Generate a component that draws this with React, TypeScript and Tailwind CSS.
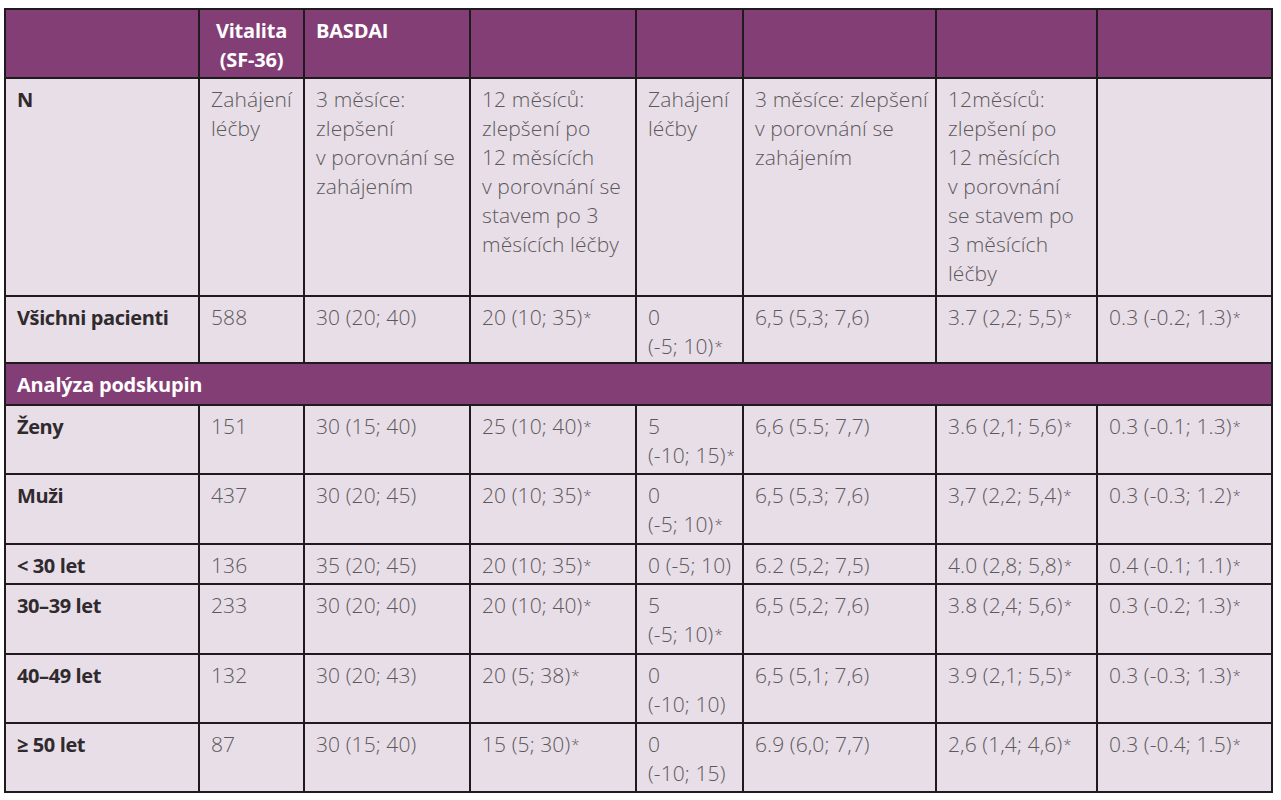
const cols = [194, 105, 166, 166, 107, 193, 161, 175]

type Cell = string | string[]

interface DataRow {
  label: string
  cells: Cell[]
  h: string
}

const topRows: DataRow[] = [
  {
    label: 'Všichni pacienti',
    h: 'h-[67px]',
    cells: ['588', '30 (20; 40)', '20 (10; 35)*', ['0', '(-5; 10)*'], '6,5 (5,3; 7,6)', '3.7 (2,2; 5,5)*', '0.3 (-0.2; 1.3)*'],
  },
]

const subRows: DataRow[] = [
  {
    label: 'Ženy',
    h: 'h-[69px]',
    cells: ['151', '30 (15; 40)', '25 (10; 40)*', ['5', '(-10; 15)*'], '6,6 (5.5; 7,7)', '3.6 (2,1; 5,6)*', '0.3 (-0.1; 1.3)*'],
  },
  {
    label: 'Muži',
    h: 'h-[70px]',
    cells: ['437', '30 (20; 45)', '20 (10; 35)*', ['0', '(-5; 10)*'], '6,5 (5,3; 7,6)', '3,7 (2,2; 5,4)*', '0.3 (-0.3; 1.2)*'],
  },
  {
    label: '< 30 let',
    h: 'h-[40px]',
    cells: ['136', '35 (20; 45)', '20 (10; 35)*', '0 (-5; 10)', '6.2 (5,2; 7,5)', '4.0 (2,8; 5,8)*', '0.4 (-0.1; 1.1)*'],
  },
  {
    label: '30–39 let',
    h: 'h-[70px]',
    cells: ['233', '30 (20; 40)', '20 (10; 40)*', ['5', '(-5; 10)*'], '6,5 (5,2; 7,6)', '3.8 (2,4; 5,6)*', '0.3 (-0.2; 1.3)*'],
  },
  {
    label: '40–49 let',
    h: 'h-[69px]',
    cells: ['132', '30 (20; 43)', '20 (5; 38)*', ['0', '(-10; 10)'], '6,5 (5,1; 7,6)', '3.9 (2,1; 5,5)*', '0.3 (-0.3; 1.3)*'],
  },
  {
    label: '≥ 50 let',
    h: 'h-[69px]',
    cells: ['87', '30 (15; 40)', '15 (5; 30)*', ['0', '(-10; 15)'], '6.9 (6,0; 7,7)', '2,6 (1,4; 4,6)*', '0.3 (-0.4; 1.5)*'],
  },
]

const nRow: string[][] = [
  ['Zahájení', 'léčby'],
  ['3 měsíce:', 'zlepšení', 'v porovnání se', 'zahájením'],
  ['12 měsíců:', 'zlepšení po', '12 měsících', 'v porovnání se', 'stavem po 3', 'měsících léčby'],
  ['Zahájení', 'léčby'],
  ['3 měsíce: zlepšení', 'v porovnání se', 'zahájením'],
  ['12měsíců:', 'zlepšení po', '12 měsících', 'v porovnání', 'se stavem po', '3 měsících', 'léčby'],
  [],
]

const cellBase = 'border-2 border-[#1e1a1e] align-top px-[11px] pt-[6px] pb-0'
const bodyText = 'text-[21px] leading-[29px] text-[#5d585b] font-light tracking-[0.1px] whitespace-nowrap'
const labelText = 'text-[20px] leading-[29px] text-[#2f2a2e] font-bold tracking-[-0.4px] whitespace-nowrap'
const headText = 'text-[20px] leading-[29px] font-bold tracking-[-0.2px] text-white'

function Line({ text }: { text: string }) {
  // the significance mark is set small and raised in the source table
  if (text.endsWith('*')) {
    return (
      <div className="h-[29px]">
        {text.slice(0, -1)}
        <span className="relative -top-[2px] ml-[1px] text-[15px] leading-[0]">*</span>
      </div>
    )
  }
  return <div>{text}</div>
}

function Lines({ value }: { value: Cell }) {
  const lines = Array.isArray(value) ? value : [value]
  return (
    <>
      {lines.map((l, i) => (
        <Line key={i} text={l} />
      ))}
    </>
  )
}

function Row({ row }: { row: DataRow }) {
  return (
    <tr className={`${row.h} bg-[#e7dee7]`}>
      <td className={`${cellBase} ${labelText}`}>{row.label}</td>
      {row.cells.map((c, i) => (
        <td key={i} className={`${cellBase} ${bodyText}`}>
          <Lines value={c} />
        </td>
      ))}
    </tr>
  )
}

export default function App() {
  return (
    <div className="min-h-screen bg-white pl-[4px] pt-[8px]" style={{ fontFamily: '"Open Sans", Lato, sans-serif' }}>
      <table className="table-fixed border-collapse w-[1269px]">
        <colgroup>
          {cols.map((w, i) => (
            <col key={i} style={{ width: w }} />
          ))}
        </colgroup>
        <thead>
          <tr className="h-[69px] bg-[#833e76]">
            <th className={cellBase} />
            <th className={`${cellBase} ${headText} text-center`}>
              Vitalita
              <br />
              (SF-36)
            </th>
            <th className={`${cellBase} ${headText} text-left`}>BASDAI</th>
            <th className={cellBase} />
            <th className={cellBase} />
            <th className={cellBase} />
            <th className={cellBase} />
            <th className={cellBase} />
          </tr>
        </thead>
        <tbody>
          <tr className="h-[218px] bg-[#e7dee7]">
            <td className={`${cellBase} ${labelText}`}>N</td>
            {nRow.map((lines, i) => (
              <td key={i} className={`${cellBase} ${bodyText}`}>
                <Lines value={lines} />
              </td>
            ))}
          </tr>
          {topRows.map((r) => (
            <Row key={r.label} row={r} />
          ))}
          <tr className="h-[42px] bg-[#833e76]">
            <td colSpan={8} className={`border-2 border-[#1e1a1e] px-[11px] align-middle ${headText}`}>
              Analýza podskupin
            </td>
          </tr>
          {subRows.map((r) => (
            <Row key={r.label} row={r} />
          ))}
        </tbody>
      </table>
    </div>
  )
}
